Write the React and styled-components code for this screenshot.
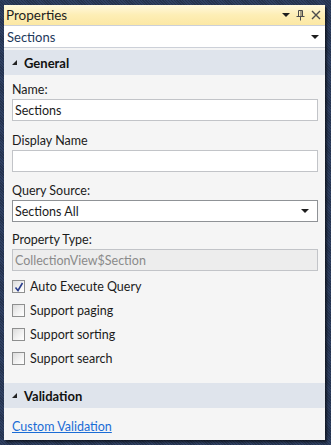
import styled, { createGlobalStyle } from "styled-components";

const GlobalStyle = createGlobalStyle`
    html, body {
        margin: 0;
        padding: 0;
        width: 331px;
        height: 445px;
        overflow: hidden;
    }
    body {
        font-family: "Segoe UI", Lato, "Open Sans", sans-serif;
        font-size: 12.5px;
        color: #1b1b1b;
    }
`

const Desk = styled.div`
    width: 331px;
    height: 445px;
    box-sizing: border-box;
    padding: 5px 6px 5px 4px;
    background: #293955;
    background-image: repeating-linear-gradient(45deg, #2f4062 0 1px, #25334e 1px 2px);
`

const Panel = styled.div`
    height: 100%;
    display: flex;
    flex-direction: column;
    background: #f5f5f5;
    box-shadow: 2px 2px 2px rgba(0, 0, 0, 0.55);
`

const TitleBar = styled.div`
    height: 20px;
    display: flex;
    align-items: center;
    justify-content: space-between;
    padding: 0 4px 0 2px;
    background: linear-gradient(#fff8dd, #fdeeb5 50%, #fce8a4);
    font-size: 13.5px;
    color: #1e1e1e;
`

const TitleIcons = styled.div`
    display: flex;
    align-items: center;
    gap: 6px;
    color: #4c4c4c;
`

const Selector = styled.div`
    height: 21px;
    display: flex;
    align-items: center;
    justify-content: space-between;
    padding: 0 6px 0 3px;
    background: #fff;
    border-top: 1px solid #ccd0d8;
    border-bottom: 1px solid #ccd0d8;
    font-size: 13px;
    color: #1e395b;
`

const Caret = styled.span`
    width: 0;
    height: 0;
    border-left: 4px solid transparent;
    border-right: 4px solid transparent;
    border-top: 4px solid #1e1e1e;
`

const GroupHeader = styled.div`
    height: 25px;
    margin-top: ${p => p.$gap}px;
    display: flex;
    align-items: center;
    gap: 7px;
    padding-left: 8px;
    background: #dfe4ec;
    font-weight: bold;
    font-size: 13px;
    color: #111;
`

const Expander = styled.span`
    width: 0;
    height: 0;
    border-left: 5px solid transparent;
    border-bottom: 5px solid #222;
`

const Body = styled.div`
    display: flex;
    flex-direction: column;
    padding: 6px 7px 10px 8px;
`

const Label = styled.div`
    font-size: 12.5px;
    line-height: 17px;
    margin-top: ${p => p.$top || 0}px;
    color: #1b1b1b;
`

const Input = styled.div`
    height: 20px;
    box-sizing: content-box;
    display: flex;
    align-items: center;
    justify-content: space-between;
    padding: 0 8px 0 2px;
    border: 1px solid ${p => (p.$dark ? "#8f9296" : "#c2c4c8")};
    background: ${p => (p.$disabled ? "#ededed" : "#fff")};
    color: ${p => (p.$disabled ? "#8a8a8a" : "#1b1b1b")};
    font-size: 12.5px;
    margin-top: 1px;
`

const CheckList = styled.div`
    display: flex;
    flex-direction: column;
    gap: 7px;
    margin-top: 7px;
`

const CheckRow = styled.label`
    display: flex;
    align-items: center;
    gap: 5px;
    height: 17px;
    font-size: 12.5px;
`

const Box = styled.span`
    width: 11px;
    height: 11px;
    border: 1px solid #8e8f8f;
    background: linear-gradient(135deg, #dcdcdc, #f4f4f4 60%, #fff);
    display: flex;
    align-items: center;
    justify-content: center;
`

const Link = styled.a`
    color: #1a6cd6;
    text-decoration: underline;
    font-size: 12.5px;
    padding: 11px 0 0 8px;
`

function Check({ checked, children }) {
    return (
        <CheckRow>
            <Box>
                {checked && (
                    <svg width="10" height="10" viewBox="0 0 10 10">
                        <path d="M1.5 5.5 L4 8.5 L8.5 1" fill="none" stroke="#2a3e8c" strokeWidth="1.6" />
                    </svg>
                )}
            </Box>
            {children}
        </CheckRow>
    )
}

export default function App() {
    return (
        <Desk>
            <GlobalStyle />
            <Panel>
                <TitleBar>
                    <span>Properties</span>
                    <TitleIcons>
                        <Caret />
                        <svg width="9" height="11" viewBox="0 0 9 11">
                            <path d="M2.5 0.5 H6.5 V6 M2.5 0.5 V6 M0.5 6.5 H8.5 M4.5 6.5 V10.5 M5 1 V6" fill="none" stroke="#4c4c4c" strokeWidth="1" />
                        </svg>
                        <svg width="10" height="10" viewBox="0 0 10 10">
                            <path d="M1 1 L9 9 M9 1 L1 9" stroke="#4c4c4c" strokeWidth="1.4" />
                        </svg>
                    </TitleIcons>
                </TitleBar>
                <Selector>
                    <span>Sections</span>
                    <Caret />
                </Selector>
                <GroupHeader $gap={2}>
                    <Expander />
                    General
                </GroupHeader>
                <Body>
                    <Label>Name:</Label>
                    <Input>Sections</Input>
                    <Label $top={11}>Display Name</Label>
                    <Input />
                    <Label $top={10}>Query Source:</Label>
                    <Input $dark>
                        <span>Sections All</span>
                        <Caret />
                    </Input>
                    <Label $top={9}>Property Type:</Label>
                    <Input $disabled>CollectionView$Section</Input>
                    <CheckList>
                        <Check checked>Auto Execute Query</Check>
                        <Check>Support paging</Check>
                        <Check>Support sorting</Check>
                        <Check>Support search</Check>
                    </CheckList>
                </Body>
                <GroupHeader $gap={6}>
                    <Expander />
                    Validation
                </GroupHeader>
                <Link>Custom Validation</Link>
            </Panel>
        </Desk>
    )
}
